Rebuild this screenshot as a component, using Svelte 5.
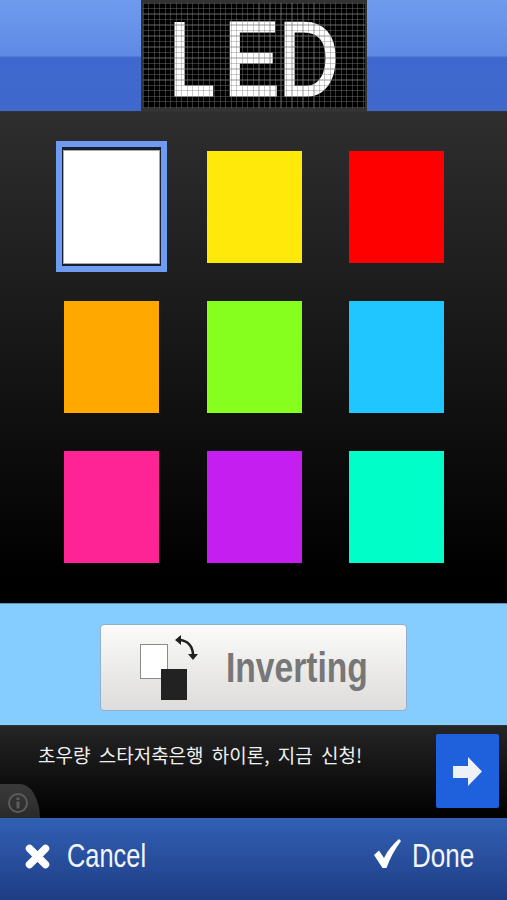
<script lang="ts">
  const colors = [
    '#ffffff', '#ffe90b', '#ff0000',
    '#ffa800', '#86ff1e', '#1fc6ff',
    '#ff2496', '#c41ff0', '#00ffc8',
  ]
  let selected = $state(0)
</script>

<div class="app">
  <header class="top">
    <div class="led">
      <div class="led-text"><span class="first">L</span>ED</div>
      <div class="led-grid"></div>
    </div>
  </header>

  <main class="palette">
    {#each colors as color, i}
      <button class="swatch" class:selected={selected === i} onclick={() => (selected = i)}>
        <span class="fill" style="background: {color}"></span>
      </button>
    {/each}
  </main>

  <section class="invert-bar">
    <button class="invert">
      <svg width="60" height="66" viewBox="0 0 60 66">
        <rect x="0.5" y="9.5" width="27" height="34" fill="#fff" stroke="#8a8a8a" />
        <rect x="21" y="34" width="26" height="31" fill="#222" />
        <path d="M39 5 C47 5 53 11 53 20" fill="none" stroke="#222" stroke-width="2.5" />
        <path d="M35 5 L41 0 L41 10 Z M53 25 L48 19 L58 19 Z" fill="#222" />
      </svg>
      <span>Inverting</span>
    </button>
  </section>

  <aside class="ad">
    <p>초우량 스타저축은행 하이론, 지금 신청!</p>
    <div class="ad-go">
      <svg width="29" height="29" viewBox="0 0 29 29">
        <path d="M0 9 H15 V0 L29 14.5 L15 29 V21 H0 Z" fill="#eef1f6" />
      </svg>
    </div>
    <div class="ad-info">
      <svg width="20" height="20" viewBox="0 0 20 20">
        <circle cx="10" cy="10" r="9" fill="none" stroke="#5c5c5c" stroke-width="2" />
        <rect x="8.5" y="8.5" width="3" height="7" fill="#5c5c5c" />
        <rect x="8.5" y="4.5" width="3" height="2.5" fill="#5c5c5c" />
      </svg>
    </div>
  </aside>

  <footer class="bottom">
    <button class="action cancel">
      <svg width="25" height="25" viewBox="0 0 25 25">
        <path d="M4.5 4.5 L20.5 20.5 M20.5 4.5 L4.5 20.5" stroke="#fff" stroke-width="7.5" stroke-linecap="round" />
      </svg>
      <span>Cancel</span>
    </button>
    <button class="action done">
      <svg width="27" height="29" viewBox="0 0 27 29">
        <path d="M0 16 L5 11.5 L10 19 C14 11 19 5 25 0 L27 2 C21 10 16 19 12.5 29 L8.5 29 Z" fill="#fff" />
      </svg>
      <span>Done</span>
    </button>
  </footer>
</div>

<style>
  :global(body) {
    margin: 0;
    background: #000;
  }

  .app {
    width: 507px;
    height: 900px;
    display: flex;
    flex-direction: column;
    overflow: hidden;
    font-family: 'Liberation Sans', sans-serif;
  }

  button {
    border: 0;
    padding: 0;
    background: none;
    font-family: inherit;
  }

  .top {
    height: 112px;
    flex: none;
    display: flex;
    justify-content: center;
    background: linear-gradient(#6f9bee 0%, #5f8ae4 50%, #4069cf 52%, #3f68cc 100%);
    border-bottom: 1px solid #333;
    box-sizing: border-box;
  }

  .led {
    position: relative;
    width: 226px;
    background: #000;
    border: 2px solid #333;
    border-top-width: 3px;
    border-bottom-width: 3px;
    box-sizing: border-box;
  }

  .led-text {
    position: absolute;
    top: 17px;
    left: 26px;
    color: #fff;
    font-size: 104px;
    line-height: 79px;
    -webkit-text-stroke: 3px #fff;
    white-space: nowrap;
    transform: scaleX(0.79);
    transform-origin: left center;
  }

  .led-text .first {
    letter-spacing: 12px;
  }

  .led-grid {
    position: absolute;
    inset: 0;
    background-image:
      repeating-linear-gradient(90deg, rgba(128, 128, 128, 0.4) 0 1px, transparent 1px 5.5px),
      repeating-linear-gradient(0deg, rgba(128, 128, 128, 0.4) 0 1px, transparent 1px 5.5px);
  }

  .palette {
    height: 491px;
    flex: none;
    box-sizing: border-box;
    display: grid;
    grid-template-columns: repeat(3, 95px);
    grid-auto-rows: 112px;
    column-gap: 47.5px;
    row-gap: 38px;
    padding: 39px 0 0 64px;
    background: linear-gradient(#2e2e2e, #000 95%);
  }

  .swatch {
    position: relative;
    display: block;
  }

  .fill {
    display: block;
    width: 100%;
    height: 100%;
  }

  .swatch.selected::before {
    content: '';
    position: absolute;
    inset: -10px -8px -9px -8px;
    border: 6px solid #6f9bf0;
    background: #16202f;
  }

  .swatch.selected .fill {
    position: relative;
    box-shadow: 0 0 0 1px #aaa;
  }

  .invert-bar {
    height: 122px;
    flex: none;
    box-sizing: border-box;
    display: flex;
    justify-content: center;
    padding-top: 20px;
    background: #85ccff;
    border-top: 1px solid #5f93ba;
  }

  .invert {
    width: 307px;
    height: 87px;
    display: flex;
    align-items: center;
    gap: 26px;
    padding: 0 0 0 39px;
    box-sizing: border-box;
    background: linear-gradient(#fbfbfa, #dddcda);
    border: 1px solid #8fb1cc;
    border-radius: 4px;
  }

  .invert span {
    font-size: 42px;
    font-weight: bold;
    color: #777;
    white-space: nowrap;
    transform: scaleX(0.8);
    transform-origin: left center;
    margin-right: -35px;
  }

  .ad {
    position: relative;
    height: 93px;
    flex: none;
    box-sizing: border-box;
    background: linear-gradient(#252525, #000);
    border-top: 1px solid #333;
  }

  .ad p {
    margin: 0;
    padding: 14px 0 0 38px;
    color: #efefef;
    font-family: 'Noto Sans CJK KR', sans-serif;
    font-size: 19px;
    word-spacing: 4px;
    line-height: 30px;
  }

  .ad-go {
    position: absolute;
    top: 8px;
    right: 8px;
    width: 63px;
    height: 74px;
    display: flex;
    align-items: center;
    justify-content: center;
    background: #1f60dc;
    border-radius: 2px;
  }

  .ad-info {
    position: absolute;
    left: 0;
    bottom: 0;
    width: 40px;
    height: 34px;
    padding: 9px 0 0 8px;
    box-sizing: border-box;
    background: linear-gradient(#3a3a3a, #2a2a2a);
    border-top-right-radius: 20px 34px;
  }

  .bottom {
    height: 82px;
    flex: none;
    box-sizing: border-box;
    display: flex;
    justify-content: space-between;
    align-items: center;
    padding: 0 33px 6px 25px;
    background: linear-gradient(#3160b4, #1f3d85);
  }

  .action {
    display: flex;
    align-items: center;
    color: #f2f5fb;
    font-size: 33px;
  }

  .action span {
    display: block;
    white-space: nowrap;
    transform-origin: left center;
  }

  .cancel {
    gap: 17px;
  }

  .cancel span {
    transform: scaleX(0.77);
    margin-right: -24px;
  }

  .done {
    gap: 11px;
  }

  .done svg {
    margin-top: -5px;
  }

  .done span {
    transform: scaleX(0.79);
    margin-right: -16.5px;
  }
</style>
